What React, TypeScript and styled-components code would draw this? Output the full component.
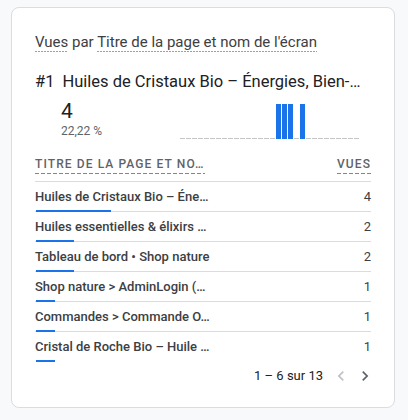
import React from "react";
import styled, { createGlobalStyle } from "styled-components";

const Global = createGlobalStyle`
  html, body { margin: 0; padding: 0; background: #f8f9fa; }
  body { font-family: Roboto, "Noto Sans", Arial, sans-serif; }
`;

const Page = styled.div`
  padding: 7px 0 0 11px;
`;

const Card = styled.section`
  box-sizing: border-box;
  width: 384px;
  height: 401px;
  background: #ffffff;
  border: 1px solid #dadce0;
  border-radius: 8px;
  padding: 24px 23px 0 23px;
  display: flex;
  flex-direction: column;
`;

const Title = styled.h2`
  margin: 0;
  font-size: 15px;
  line-height: 20px;
  font-weight: 400;
  color: #3c4043;
  white-space: nowrap;
`;

const Dotted = styled.span`
  background-image: repeating-linear-gradient(to right, #9aa0a6 0 2px, transparent 2px 3px);
  background-size: 100% 1px;
  background-repeat: no-repeat;
  background-position: 0 18px;
  padding-bottom: 2px;
`;

const Rank = styled.div`
  margin-top: 18px;
  display: flex;
  gap: 8px;
  font-size: 16.5px;
  line-height: 24px;
  color: #202124;
  white-space: nowrap;
`;

const Summary = styled.div`
  display: flex;
  align-items: flex-end;
  justify-content: space-between;
  padding-left: 26px;
  padding-right: 11px;
`;

const Figures = styled.div`
  display: flex;
  flex-direction: column;
`;

const BigValue = styled.div`
  margin-top: 5px;
  font-size: 21px;
  line-height: 24px;
  color: #202124;
`;

const Percent = styled.div`
  font-size: 12px;
  line-height: 17px;
  color: #5f6368;
`;

const Chart = styled.div`
  display: flex;
  align-items: flex-end;
  height: 36px;
  margin-bottom: 1px;
`;

const Slot = styled.div<{ $bar: boolean }>`
  width: 5px;
  margin-right: 1px;
  height: ${(p) => (p.$bar ? "35px" : "1px")};
  background: ${(p) => (p.$bar ? "#1a73e8" : "#c4c7c5")};
`;

const HeaderRow = styled.div`
  display: flex;
  justify-content: space-between;
  padding-top: 16px;
  padding-bottom: 7px;
  border-bottom: 1px solid #dadce0;
`;

const HeaderCell = styled.span`
  font-size: 12px;
  line-height: 16px;
  font-weight: 500;
  letter-spacing: 1.1px;
  text-transform: uppercase;
  color: #5f6368;
  white-space: nowrap;
  background-image: repeating-linear-gradient(to right, #80868b 0 4px, transparent 4px 6px);
  background-size: 100% 1px;
  background-repeat: no-repeat;
  background-position: 0 17px;
  padding-bottom: 2px;
`;

const Row = styled.div<{ $last?: boolean }>`
  box-sizing: border-box;
  height: 30px;
  padding-top: 7px;
  display: grid;
  grid-template-columns: 1fr auto;
  grid-template-rows: 16px 2px;
  row-gap: 5px;
  border-bottom: ${(p) => (p.$last ? "none" : "1px solid #dadce0")};
`;

const Label = styled.span`
  font-size: 13px;
  line-height: 16px;
  font-weight: 500;
  color: #3c4043;
  white-space: nowrap;
`;

const Count = styled.span`
  font-size: 13px;
  line-height: 16px;
  color: #3c4043;
  text-align: right;
`;

const Bar = styled.div`
  grid-column: 1 / 3;
  height: 2px;
  background: #1a73e8;
  margin-left: 1px;
`;

const Pager = styled.div`
  display: flex;
  justify-content: flex-end;
  align-items: center;
  margin-top: 4px;
  margin-right: -6px;
  height: 20px;
`;

const PagerText = styled.span`
  font-size: 13px;
  line-height: 20px;
  color: #202124;
  margin-right: 6px;
`;

const IconButton = styled.button<{ $disabled?: boolean }>`
  width: 24px;
  height: 20px;
  padding: 0;
  border: none;
  background: transparent;
  display: flex;
  align-items: center;
  justify-content: center;
  color: ${(p) => (p.$disabled ? "#bdc1c6" : "#5f6368")};
`;

const Chevron = ({ dir }: { dir: "left" | "right" }) => (
  <svg width="20" height="20" viewBox="0 0 24 24" fill="currentColor">
    {dir === "left" ? (
      <path d="M15.41 7.41L14 6l-6 6 6 6 1.41-1.41L10.83 12z" />
    ) : (
      <path d="M10 6L8.59 7.41 13.17 12l-4.58 4.59L10 18l6-6z" />
    )}
  </svg>
);

const rows = [
  { label: "Huiles de Cristaux Bio – Éne…", value: 4 },
  { label: "Huiles essentielles & élixirs …", value: 2 },
  { label: "Tableau de bord • Shop nature", value: 2 },
  { label: "Shop nature > AdminLogin (…", value: 1 },
  { label: "Commandes > Commande O…", value: 1 },
  { label: "Cristal de Roche Bio – Huile …", value: 1 },
];

const chartData = Array.from({ length: 30 }, (_, i) => ([16, 17, 18, 20].includes(i) ? 1 : 0));

export default function App() {
  return (
    <Page>
      <Global />
      <Card>
        <Title>
          <Dotted>Vues</Dotted> par <Dotted>Titre de la page et nom de l'écran</Dotted>
        </Title>
        <Rank>
          <span>#1</span>
          <span>Huiles de Cristaux Bio – Énergies, Bien-…</span>
        </Rank>
        <Summary>
          <Figures>
            <BigValue>4</BigValue>
            <Percent>22,22 %</Percent>
          </Figures>
          <Chart>
            {chartData.map((v, i) => (
              <Slot key={i} $bar={v > 0} />
            ))}
          </Chart>
        </Summary>
        <HeaderRow>
          <HeaderCell>Titre de la page et no…</HeaderCell>
          <HeaderCell>Vues</HeaderCell>
        </HeaderRow>
        {rows.map((r, i) => (
          <Row key={i} $last={i === rows.length - 1}>
            <Label>{r.label}</Label>
            <Count>{r.value}</Count>
            <Bar style={{ width: `${r.value * 18.75}px` }} />
          </Row>
        ))}
        <Pager>
          <PagerText>1 – 6 sur 13</PagerText>
          <IconButton $disabled aria-label="Précédent">
            <Chevron dir="left" />
          </IconButton>
          <IconButton aria-label="Suivant">
            <Chevron dir="right" />
          </IconButton>
        </Pager>
      </Card>
    </Page>
  );
}
